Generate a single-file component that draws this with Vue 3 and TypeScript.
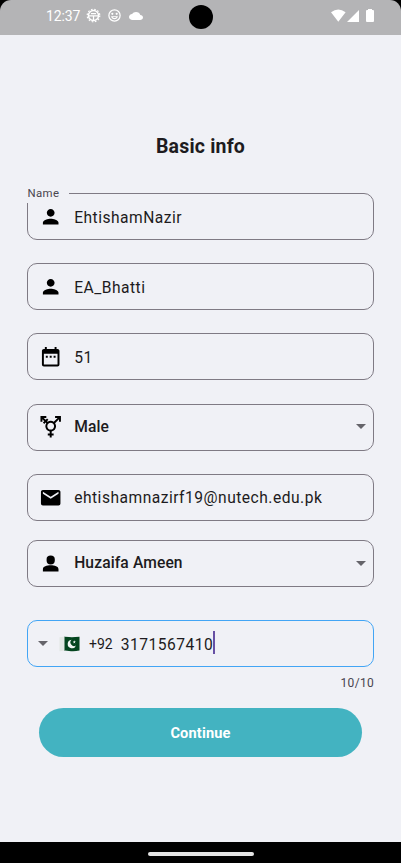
<script setup lang="ts">
import { ref } from 'vue'

interface Field {
  id: string
  value: string
  icon: string
  label?: string
  select?: boolean
}

const personIcon =
  'M12 12c2.21 0 4-1.79 4-4s-1.79-4-4-4-4 1.79-4 4 1.79 4 4 4zm0 2c-2.67 0-8 1.34-8 4v2h16v-2c0-2.66-5.33-4-8-4z'
const guardianIcon =
  'M12 3.500C9.300 3.500 7.800 4.900 7.800 7.200V9c0 2 1.500 3.900 4.200 3.900s4.200-1.900 4.200-3.900V7.200C16.200 4.900 14.700 3.500 12 3.500zM12 13.600C8 13.600 4 14.700 4 17.600V20h16v-2.400c0-2.900-4-4-8-4z'
const calendarIcon =
  'M9 11H7v2h2v-2zm4 0h-2v2h2v-2zm4 0h-2v2h2v-2zm2-7h-1V2h-2v2H8V2H6v2H5c-1.110 0-1.990.9-1.990 2L3 20c0 1.100.890 2 2 2h14c1.100 0 2-.9 2-2V6c0-1.100-.9-2-2-2zm0 16H5V9h14v11z'
const genderIcon =
  'M12 8c1.930 0 3.500 1.570 3.500 3.500S13.930 15 12 15s-3.500-1.570-3.500-3.500S10.070 8 12 8zM16.530 8.380l3.970-3.960V7h2V1h-6v2h2.580l-3.970 3.970C14.230 6.360 13.160 6 12 6c-1.160 0-2.230.360-3.110.970L8.240 6.320l1.410-1.410L8.240 3.490 6.820 4.900 4.920 3H7.500V1h-6v6h2V4.420l1.910 1.900L3.990 7.740l1.410 1.410 1.410-1.410.650.650C6.860 9.270 6.500 10.340 6.500 11.500c0 2.700 1.940 4.940 4.500 5.410V19H9v2h2v2h2v-2h2v-2h-2v-2.090c2.560-.470 4.500-2.710 4.500-5.410 0-1.160-.360-2.230-.970-3.120z'
const mailIcon =
  'M20 4H4c-1.100 0-1.990.9-1.990 2L2 18c0 1.100.9 2 2 2h16c1.100 0 2-.9 2-2V6c0-1.100-.9-2-2-2zm0 4l-8 5-8-5V6l8 5 8-5v2z'

const fields = ref<Field[]>([
  { id: 'name', value: 'EhtishamNazir', icon: personIcon, label: 'Name' },
  { id: 'username', value: 'EA_Bhatti', icon: personIcon },
  { id: 'age', value: '51', icon: calendarIcon },
  { id: 'gender', value: 'Male', icon: genderIcon, select: true },
  { id: 'email', value: 'ehtishamnazirf19@nutech.edu.pk', icon: mailIcon },
  { id: 'guardian', value: 'Huzaifa Ameen', icon: guardianIcon, select: true },
])
const phone = ref('3171567410')
</script>

<template>
  <div class="screen">
    <header class="status">
      <span class="clock">12:37</span>
      <svg class="gear" viewBox="0 0 16 16">
        <circle cx="8" cy="8" r="5.400" fill="none" stroke="#fff" stroke-width="1.500" />
        <circle cx="8" cy="8" r="6.700" fill="none" stroke="#fff" stroke-width="1.300" stroke-dasharray="1.750 1.750" />
        <path d="M3 8.300h10M8 8.300V13M5.300 5.900h5.400" fill="none" stroke="#fff" stroke-width="1.300" />
      </svg>
      <svg class="smile" viewBox="0 0 24 24" fill="#fff">
        <path d="M12 2a10 10 0 1 0 0 20 10 10 0 0 0 0-20zm0 18a8 8 0 1 1 0-16 8 8 0 0 1 0 16zM8.500 7.500a1.500 1.500 0 0 0 0 3.500 1.500 1.500 0 0 0 0-3.500zm7 0a1.500 1.500 0 0 0 0 3.500 1.500 1.500 0 0 0 0-3.500zM6.500 13h11c-.6 3-2.800 4.800-5.500 4.800S7.100 16 6.500 13zm2.400 1.500c1.500 1.900 4.700 1.900 6.200 0z" />
      </svg>
      <svg class="cloud" viewBox="0 4 24 16" preserveAspectRatio="none" fill="#fff">
        <path d="M19.350 10.040C18.670 6.590 15.640 4 12 4 9.110 4 6.600 5.640 5.350 8.040 2.340 8.360 0 10.910 0 14c0 3.310 2.690 6 6 6h13c2.760 0 5-2.240 5-5 0-2.640-2.050-4.780-4.650-4.960z" />
      </svg>
      <i class="camera"></i>
      <svg class="system" viewBox="0 0 44 14" fill="#fff">
        <path d="M0 3.200Q7.300-2.300 14.600 3.200L7.300 12.700zM28 1v12H16z" />
        <path d="M37 1V0h4v1h1q1 0 1 1v10q0 1-1 1h-6q-1 0-1-1V2q0-1 1-1z" />
      </svg>
    </header>

    <main class="form">
      <h1>Basic info</h1>
      <div v-for="field in fields" :key="field.id" class="field" :class="[field.id, { select: field.select }]">
        <span v-if="field.label" class="label">{{ field.label }}</span>
        <svg class="icon" viewBox="0 0 24 24"><path :d="field.icon" /></svg>
        <span class="value">{{ field.value }}</span>
        <i v-if="field.select" class="arrow"></i>
      </div>

      <div class="field phone">
        <i class="arrow"></i>
        <svg class="flag" viewBox="0 0 21 16">
          <path d="M5 .7Q7.500.6 10 1t10.500-.2V14.500Q15 15.700 10 14.900T5 14.800z" fill="#04451f" />
          <path d="M.5 1.200Q3 .6 5.500.7v14.100Q3 14.700.5 15.200z" fill="#e2e7e4" />
          <path d="M12.500 3.700A4.300 4.300 0 1 0 17 9.500 3.700 3.700 0 0 1 12.500 3.700z" fill="#f2f5f3" />
          <path d="M15.300 4.200l.4 1.200h1.200l-1 .8.4 1.200-1-.7-1 .7.400-1.200-1-.8h1.200z" fill="#fff" />
        </svg>
        <span class="code">+92</span>
        <span class="number">{{ phone }}</span>
        <i class="caret"></i>
      </div>
      <p class="counter">{{ phone.length }}/10</p>
      <button type="button">Continue</button>
    </main>

    <footer class="nav"><i></i></footer>
  </div>
</template>

<style>
body {
  margin: 0;
  background: #000;
}
</style>

<style scoped>
.screen {
  width: 401px;
  height: 863px;
  display: flex;
  flex-direction: column;
  overflow: hidden;
  background: #000;
  color: #1d1b20;
  font-family: Roboto, sans-serif;
}

.status {
  position: relative;
  box-sizing: border-box;
  height: 34.500px;
  flex: none;
  display: flex;
  align-items: center;
  padding: 0 26px 3px 46px;
  border-radius: 11px 11px 0 0;
  background: #b4b4b6;
  color: #fff;
}

.clock {
  width: 39.500px;
  font-size: 14px;
  line-height: 16px;
  letter-spacing: -0.100px;
}

.gear {
  width: 15px;
  height: 15px;
}

.smile {
  width: 15px;
  height: 15px;
  margin-left: 6px;
}

.cloud {
  width: 14px;
  height: 8px;
  margin-left: 7px;
}

.camera {
  position: absolute;
  left: 188.500px;
  top: 5px;
  width: 24px;
  height: 24px;
  border-radius: 50%;
  background: #000;
}

.system {
  width: 44px;
  height: 14px;
  margin-left: auto;
}

.form {
  flex: 1;
  display: flex;
  flex-direction: column;
  padding: 0 27px;
  background: #f0f1f6;
}

h1 {
  margin: 100px 0 34.500px;
  font-size: 19.500px;
  line-height: 24px;
  font-weight: 700;
  letter-spacing: 0.200px;
  text-align: center;
}

.field {
  position: relative;
  box-sizing: border-box;
  height: 47px;
  flex: none;
  display: flex;
  align-items: center;
  margin-bottom: 23.200px;
  padding: 0 7px 0 11px;
  border: 1px solid #7f7a84;
  border-radius: 10px;
  font-size: 15.600px;
  letter-spacing: 0.490px;
}

.email {
  margin-bottom: 19.500px;
}

.guardian {
  margin-bottom: 33px;
}

.label {
  position: absolute;
  left: -1px;
  top: -9px;
  width: 41px;
  padding: 0 0 1px 0.500px;
  background: #f0f1f6;
  color: #49454f;
  font-size: 11.400px;
  line-height: 17px;
  letter-spacing: 0.400px;
}

.icon {
  width: 23.400px;
  height: 23.400px;
  margin-right: 11.800px;
}

.value {
  margin-top: 2px;
}

.select .value {
  margin-top: -1px;
  font-weight: 500;
  letter-spacing: 0.120px;
}

.arrow {
  width: 0;
  height: 0;
  border: 5px solid transparent;
  border-top-color: #65646a;
  border-bottom: 0;
}

.select .arrow {
  margin-left: auto;
  margin-top: -1px;
}

.phone {
  margin-bottom: 0;
  padding-left: 10px;
  border-color: #42a5f5;
}

.flag {
  width: 21px;
  height: 16px;
  margin-left: 11px;
}

.code {
  margin-left: 9px;
  font-size: 14px;
  letter-spacing: 0;
}

.number {
  margin: 2px 0 0 8px;
}

.caret {
  width: 2px;
  height: 23px;
  margin-top: -3px;
  background: #6750a4;
}

.counter {
  margin: 8px 0 0;
  color: #49454f;
  font-size: 12px;
  line-height: 16px;
  letter-spacing: 0.300px;
  text-align: right;
}

button {
  height: 48.500px;
  margin: 17px 12px 0;
  padding: 0;
  border: 0;
  border-radius: 25px;
  background: #43b3c1;
  color: #fff;
  font-family: inherit;
  font-size: 14.600px;
  font-weight: 700;
  letter-spacing: 0.150px;
}

.nav {
  height: 21px;
  flex: none;
  display: flex;
  justify-content: center;
  align-items: center;
  background: #000;
}

.nav i {
  width: 106px;
  height: 4px;
  margin-top: 3px;
  border-radius: 2px;
  background: #e4e4e4;
}
</style>
